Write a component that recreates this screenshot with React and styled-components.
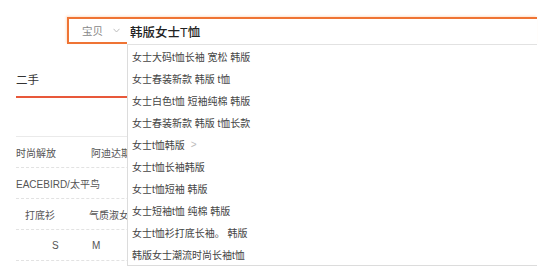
import React from "react";
import styled, { createGlobalStyle } from "styled-components";

const Global = createGlobalStyle`
  html, body { margin: 0; padding: 0; background: #fff; }
  body { font-family: "Liberation Sans", "Noto Sans CJK SC", sans-serif; color: #333; overflow: hidden; }
  * { box-sizing: border-box; }
`;

const Page = styled.div`
  width: 554px;
  height: 269px;
  display: flex;
  flex-direction: column;
`;

const Header = styled.div`
  padding: 17px 0 0 67px;
  display: flex;
`;

const SearchWrap = styled.div`
  position: relative;
  z-index: 2;
`;

const SearchBar = styled.div`
  width: 470px;
  height: 27px;
  display: flex;
  border-top: 2px solid #ef7434;
  border-left: 2px solid #ef7434;
  box-shadow: -1px -1px 2px rgba(255, 170, 110, 0.35);
`;

const Scope = styled.div`
  width: 58px;
  display: flex;
  align-items: center;
  gap: 10px;
  padding-left: 13px;
  border-bottom: 2px solid #ef7434;
  font-size: 10.5px;
  color: #888;
`;

const Query = styled.div`
  flex: 1;
  display: flex;
  align-items: center;
  padding-left: 3px;
  font-size: 12.5px;
  font-weight: 500;
  color: #222;
`;

const Dropdown = styled.ul`
  position: absolute;
  left: 60px;
  top: 27px;
  width: 410px;
  margin: 0;
  padding: 0;
  list-style: none;
  background: #fff;
  border-top: 1px solid #e2e2e2;
  border-left: 1px solid #dcdcdc;
  border-bottom: 1px solid #dcdcdc;
`;

const Item = styled.li`
  height: 22px;
  display: flex;
  align-items: center;
  gap: 6px;
  padding-left: 4px;
  font-size: 10px;
  color: #444;
  white-space: pre;
`;

const More = styled.span`
  color: #bbb;
  font-size: 10px;
`;

const Content = styled.div`
  padding-left: 16px;
  display: flex;
  flex-direction: column;
`;

const TabBar = styled.div`
  width: 500px;
  padding: 26px 0 6px;
  line-height: 20px;
  font-size: 11.5px;
  color: #333;
  border-bottom: 2px solid #e8583a;
`;

const Table = styled.div`
  width: 500px;
  margin-top: 38px;
  border-top: 1px solid #eaeaea;
  display: flex;
  flex-direction: column;
`;

const Row = styled.div`
  height: 31px;
  display: flex;
  align-items: center;
  border-bottom: 1px dashed #e2e2e2;
  font-size: 10px;
  color: #555;
`;

const Cell = styled.span`
  width: ${(p) => p.$w || 75}px;
  padding-left: ${(p) => p.$pad || 0}px;
  white-space: nowrap;
`;

const Chevron = () => (
  <svg width="7" height="5" viewBox="0 0 7 5" fill="none">
    <path d="M0.5 0.8 L3.5 4 L6.5 0.8" stroke="#b5b5b5" strokeWidth="0.9" />
  </svg>
);

const suggestions = [
  "女士大码t恤长袖 宽松 韩版",
  "女士春装新款 韩版 t恤",
  "女士白色t恤 短袖纯棉 韩版",
  "女士春装新款 韩版 t恤长款",
  "女士t恤韩版",
  "女士t恤长袖韩版",
  "女士t恤短袖 韩版",
  "女士短袖t恤 纯棉 韩版",
  "女士t恤衫打底长袖。 韩版",
  "韩版女士潮流时尚长袖t恤",
];

export default function App() {
  return (
    <Page>
      <Global />
      <Header>
        <SearchWrap>
          <SearchBar>
            <Scope>
              宝贝
              <Chevron />
            </Scope>
            <Query>韩版女士T恤</Query>
          </SearchBar>
          <Dropdown>
            {suggestions.map((s, i) => (
              <Item key={i}>
                {s}
                {i === 4 && <More>&gt;</More>}
              </Item>
            ))}
          </Dropdown>
        </SearchWrap>
      </Header>
      <Content>
        <TabBar>二手</TabBar>
        <Table>
          <Row>
            <Cell $w={75}>时尚解放</Cell>
            <Cell>阿迪达斯</Cell>
          </Row>
          <Row>
            <Cell $w={200}>EACEBIRD/太平鸟</Cell>
          </Row>
          <Row>
            <Cell $w={73} $pad={9}>打底衫</Cell>
            <Cell>气质淑女</Cell>
          </Row>
          <Row>
            <Cell $w={76} $pad={36}>S</Cell>
            <Cell>M</Cell>
          </Row>
        </Table>
      </Content>
    </Page>
  );
}
